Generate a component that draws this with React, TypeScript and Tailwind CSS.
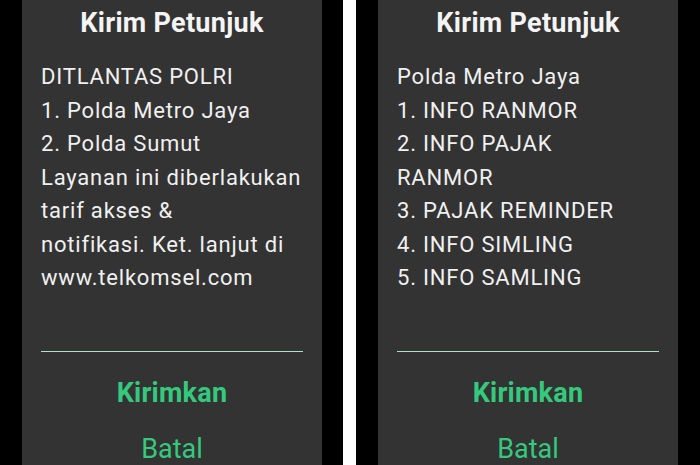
import React from "react";

const font = { fontFamily: "Roboto, 'Noto Sans', sans-serif" };

function Dialog({ lines }: { lines: string[] }) {
  return (
    <div className="w-[300px] h-full bg-[#333333] px-[19px] flex flex-col overflow-hidden">
      <div className="pt-[7px] text-center text-[27px] leading-[32px] font-bold tracking-[0.3px] text-[#f4f4f4]">
        Kirim Petunjuk
      </div>
      <div className="mt-[21px] text-[22px] leading-[33.5px] tracking-[0.8px] text-[#f0f0f0]">
        {lines.map((l) => (
          <div key={l} className="whitespace-nowrap">{l}</div>
        ))}
      </div>
      <div className="mt-[56px] h-px bg-[#a8e4c6]" />
      <div className="mt-[25px] text-center text-[27px] leading-[32px] font-bold tracking-[0.25px] text-[#35c97e]">
        Kirimkan
      </div>
      <div className="mt-[24px] text-center text-[27px] leading-[32px] text-[#35c97e]">
        Batal
      </div>
    </div>
  );
}

export default function App() {
  return (
    <div className="w-[700px] h-[465px] bg-black flex overflow-hidden" style={font}>
      <div className="w-[22px] shrink-0" />
      <Dialog
        lines={[
          "DITLANTAS POLRI",
          "1. Polda Metro Jaya",
          "2. Polda Sumut",
          "Layanan ini diberlakukan",
          "tarif akses &",
          "notifikasi. Ket. lanjut di",
          "www.telkomsel.com",
        ]}
      />
      <div className="w-[21px] shrink-0" />
      <div className="w-[13px] shrink-0 bg-white" />
      <div className="w-[22px] shrink-0" />
      <Dialog
        lines={[
          "Polda Metro Jaya",
          "1. INFO RANMOR",
          "2. INFO PAJAK",
          "RANMOR",
          "3. PAJAK REMINDER",
          "4. INFO SIMLING",
          "5. INFO SAMLING",
        ]}
      />
    </div>
  );
}
